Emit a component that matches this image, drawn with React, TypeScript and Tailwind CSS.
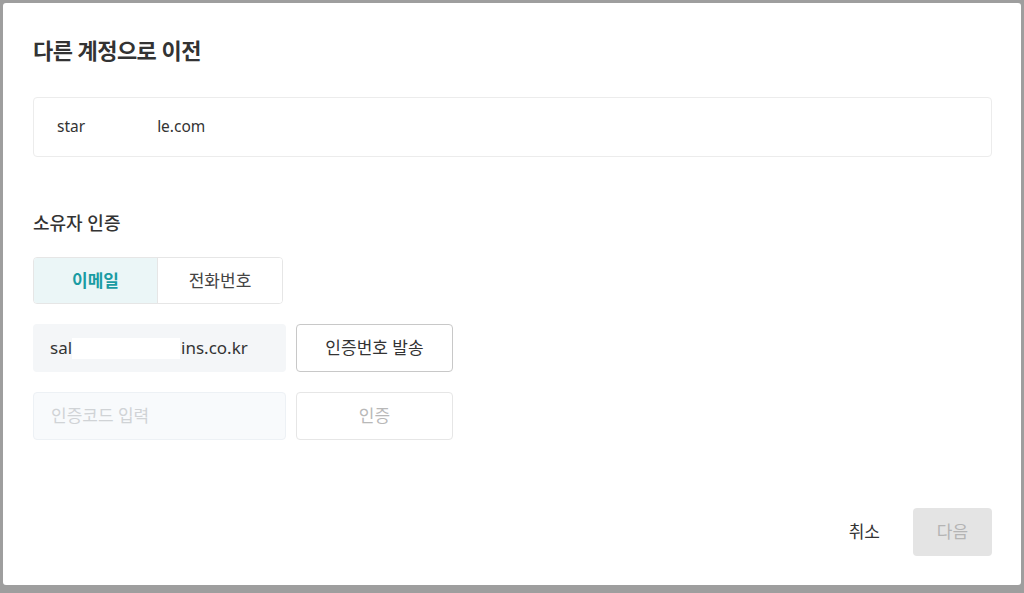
export default function App() {
  const font = { fontFamily: '"Noto Sans", "Noto Sans CJK KR", sans-serif' };

  return (
    <div
      className="w-full h-[593px] bg-[#9e9e9e] pt-[3px] pl-[3px] overflow-hidden"
      style={font}
    >
      {/* Modal */}
      <div className="w-[1018px] h-[582px] bg-white rounded-[3px] pl-[30px] pr-[29px] flex flex-col">
        <h2 className="mt-[32px] text-[22px] leading-[30px] font-bold text-[#333] tracking-tight">
          다른 계정으로 이전
        </h2>

        {/* Target account */}
        <div className="mt-[32px] h-[60px] border border-[#ececec] rounded-[4px] flex items-center pl-[23px] text-[15.5px] text-[#333]">
          <span>star</span>
          <span className="w-[72px]" />
          <span>le.com</span>
        </div>

        <div className="mt-[53px] text-[18px] leading-[26px] font-medium text-[#333]">
          소유자 인증
        </div>

        {/* Tabs */}
        <div className="mt-[21px] flex w-[250px] h-[47px] border border-[#e6e6e6] rounded-[4px] overflow-hidden text-[17px]">
          <button className="w-[124px] bg-[#ebf6f7] text-[#1a9ca3] font-bold border-r border-[#e6e6e6]">
            이메일
          </button>
          <button className="flex-1 bg-white text-[#444]">전화번호</button>
        </div>

        {/* Email row */}
        <div className="mt-[20px] flex gap-[10px]">
          <div className="w-[253px] h-[48px] bg-[#f4f6f8] rounded-[4px] flex items-center pl-[17px] text-[17px] text-[#333]">
            <span>sal</span>
            <span className="w-[108px] h-[21px] bg-white" />
            <span className="pl-[1px]">ins.co.kr</span>
          </div>
          <button className="w-[157px] h-[48px] bg-white border border-[#c8c8c8] rounded-[4px] text-[17px] text-[#333]">
            인증번호 발송
          </button>
        </div>

        {/* Code row */}
        <div className="mt-[20px] flex gap-[10px]">
          <div className="w-[253px] h-[48px] bg-[#f8fafc] border border-[#edf1f5] rounded-[4px] flex items-center pl-[17px] text-[17px] text-[#d0d3d6]">
            인증코드 입력
          </div>
          <button className="w-[157px] h-[48px] bg-white border border-[#e6e6e6] rounded-[4px] text-[17px] text-[#b8b8b8]">
            인증
          </button>
        </div>

        {/* Footer */}
        <div className="mt-auto mb-[29px] flex justify-end items-center gap-[17px]">
          <button className="h-[48px] px-[16px] text-[17px] text-[#333]">취소</button>
          <button className="w-[79px] h-[48px] bg-[#e4e4e4] rounded-[4px] text-[17px] text-[#b4b4b4]">
            다음
          </button>
        </div>
      </div>
    </div>
  );
}
